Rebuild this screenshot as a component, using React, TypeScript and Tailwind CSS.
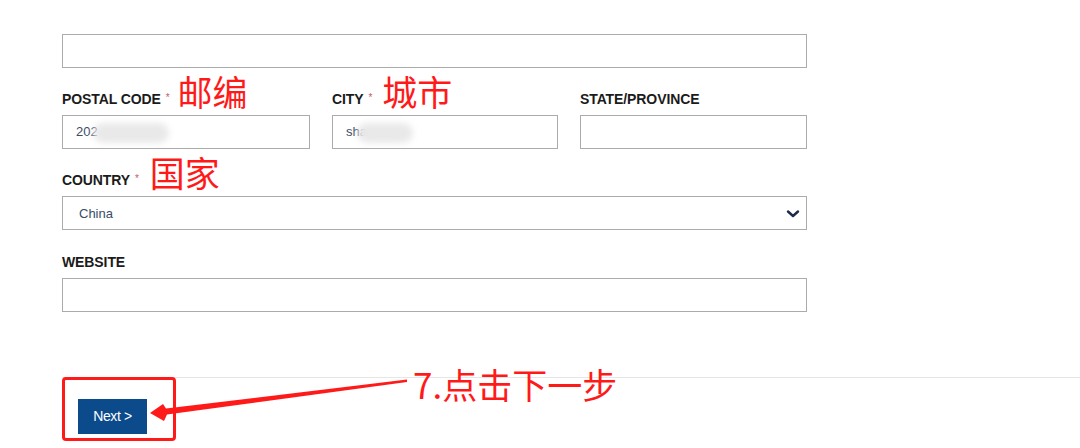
import type { ReactNode } from 'react'

const cjk = "font-['Noto_Sans_CJK_SC','Noto_Sans',sans-serif]"

function Label({ text, required, note, noteGap = 'ml-[8px]', tall }: { text: string; required?: boolean; note?: string; noteGap?: string; tall?: boolean }) {
  return (
    <div className={`flex items-end pb-[9px] ${tall ? 'h-[48px]' : 'h-[47px]'}`}>
      <span className="text-[14px] font-bold leading-[14px] tracking-[-0.1px] text-[#1b1b1b]">
        {text}
        {required ? <span className="relative top-[1px] ml-[5px] align-top text-[10px] font-normal leading-[10px] text-[#c25b6b]">*</span> : null}
      </span>
      {note ? (
        <span className={`${cjk} ${noteGap} mb-[-2px] text-[35px] leading-[35px] text-[#ff1a1a]`}>{note}</span>
      ) : null}
    </div>
  )
}

function Box({ children, className = '' }: { children?: ReactNode; className?: string }) {
  return (
    <div className={`relative flex h-[34px] items-center border border-[#ababab] bg-white pl-[13px] text-[13px] text-[#3b4b68] ${className}`}>
      {children}
    </div>
  )
}

function Smudge({ left, width }: { left: number; width: number }) {
  return (
    <span
      className="absolute top-[7px] h-[20px] rounded-full bg-[#e9e9e9] blur-[3px]"
      style={{ left, width }}
    />
  )
}

export default function App() {
  return (
    <main className="relative h-[448px] w-full overflow-hidden bg-white font-['Liberation_Sans',Arial,sans-serif]">
      <div className="w-[807px] pl-[62px] pt-[34px]">
        <Box />

        <div className="flex gap-[22px]">
          <div className="w-[248px]">
            <Label text="POSTAL CODE" required note="邮编" />
            <Box>
              <span>202</span>
              <Smudge left={30} width={76} />
            </Box>
          </div>
          <div className="w-[226px]">
            <Label text="CITY" required note="城市" noteGap="ml-[10px]" />
            <Box>
              <span>sha</span>
              <Smudge left={24} width={56} />
            </Box>
          </div>
          <div className="w-[227px]">
            <Label text="STATE/PROVINCE" />
            <Box />
          </div>
        </div>

        <Label text="COUNTRY" required note="国家" noteGap="ml-[11px]" />
        <Box className="justify-between pl-[16px] pr-[6px] pt-[2px] text-[13.5px]">
          <span>China</span>
          <svg width="14" height="10" viewBox="0 0 14 10" className="mb-[1px]">
            <polyline points="2,2.5 7,7 12,2.5" fill="none" stroke="#1d2a4d" strokeWidth="2.4" strokeLinecap="round" strokeLinejoin="round" />
          </svg>
        </Box>

        <Label text="WEBSITE" tall />
        <Box />
      </div>

      <div className="ml-[62px] mt-[65px] border-t border-[#e6e6e6] pl-[16px] pt-[21px]">
        <button className="h-[35px] w-[69px] bg-[#0b4b8c] text-[14px] tracking-[-0.4px] text-white">Next &gt;</button>
      </div>

      <div className="pointer-events-none absolute left-[62px] top-[377px] h-[64px] w-[114px] rounded-[4px] border-[3px] border-[#ff1a1a]" />

      <svg className="pointer-events-none absolute left-0 top-0" width="1080" height="448" viewBox="0 0 1080 448">
        <polygon
          points="150,413 163,404 166,408.5 407,379.5 407,382 167,414.5 164,421"
          fill="#ff1a1a"
        />
      </svg>

      <span className={`${cjk} absolute left-[413px] top-[366px] text-[35px] leading-[35px] text-[#ff1a1a]`}>7.点击下一步</span>
    </main>
  )
}
